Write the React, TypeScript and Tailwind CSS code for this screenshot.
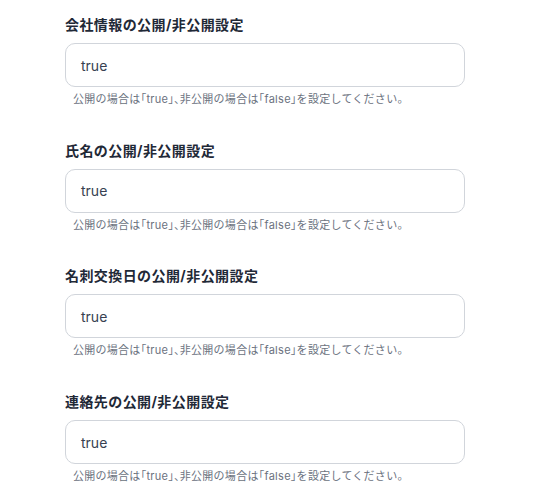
import React from 'react';

const fields = [
  '会社情報の公開/非公開設定',
  '氏名の公開/非公開設定',
  '名刺交換日の公開/非公開設定',
  '連絡先の公開/非公開設定',
];

const B: React.FC<{ children: React.ReactNode }> = ({ children }) => (
  <span className="[font-feature-settings:'halt']">{children}</span>
);

const Field: React.FC<{ label: string }> = ({ label }) => (
  <div className="flex flex-col">
    <label className="text-[14px] leading-[20px] font-bold tracking-[0.03em] text-[#1f2937]">{label}</label>
    <div className="mt-2 h-[44px] w-[400px] rounded-[10px] border border-[#d1d5db] bg-white flex items-center px-[15px]">
      <span className="text-[14px] text-[#374151]">true</span>
    </div>
    <p className="mt-1 pl-2 text-[11px] leading-[16px] tracking-[0.025em] text-[#6b7280]">
      公開の場合は<B>「</B>true<B>」、</B>非公開の場合は<B>「</B>false<B>」</B>を設定してください。
    </p>
  </div>
);

export default function App() {
  return (
    <div
      className="min-h-screen bg-white pl-[65px] pt-[15px] flex flex-col gap-[33.7px]"
      style={{ fontFamily: 'Inter, "Noto Sans CJK JP", sans-serif' }}
    >
      {fields.map((f) => (
        <Field key={f} label={f} />
      ))}
    </div>
  );
}
